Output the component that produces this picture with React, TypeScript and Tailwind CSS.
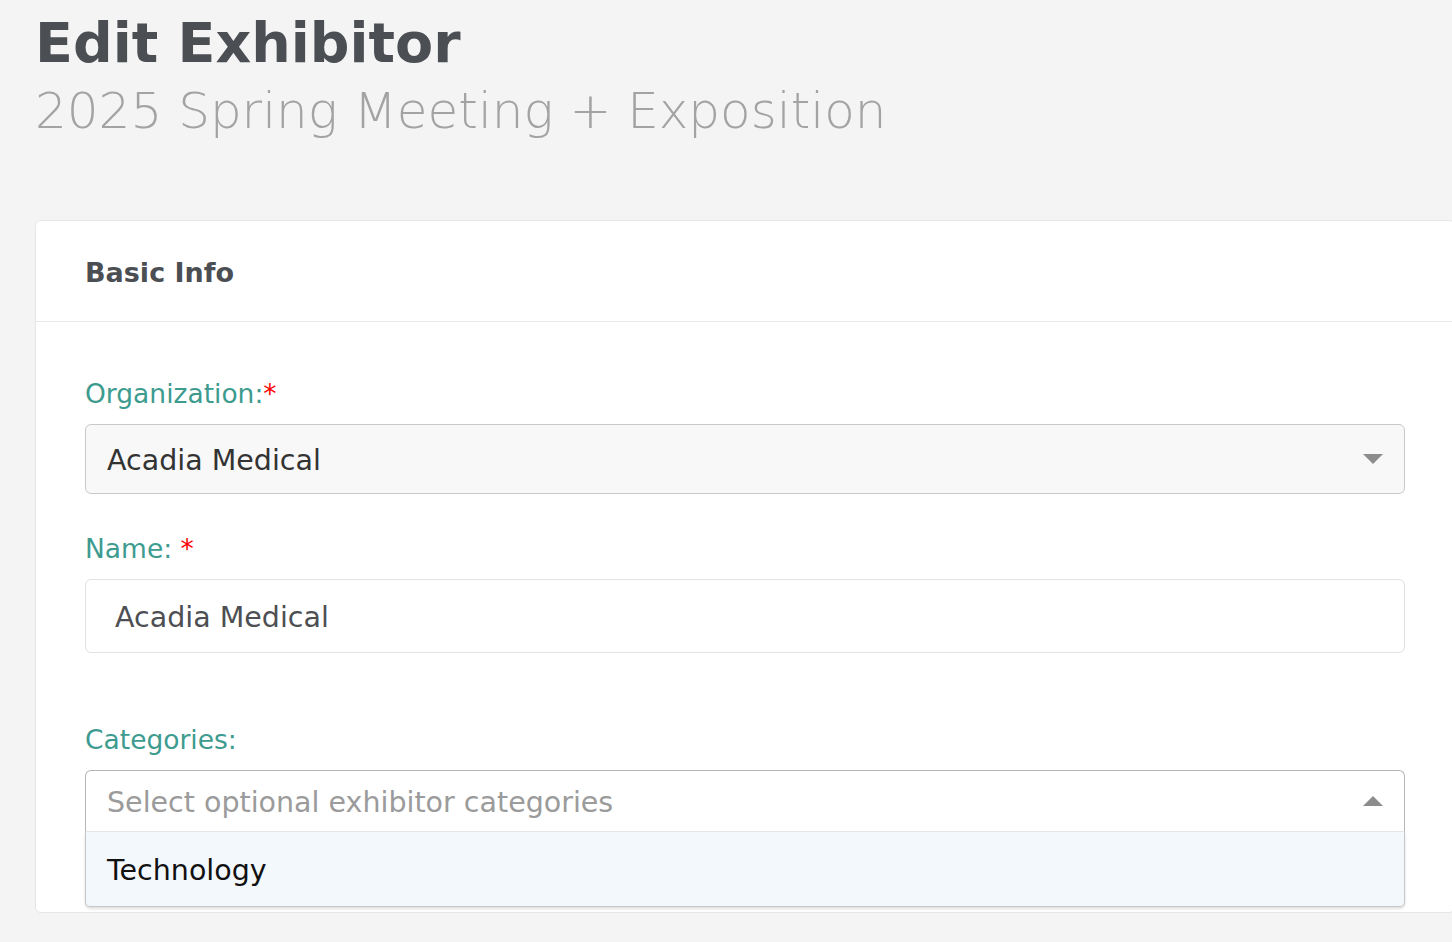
import React from 'react';

const Required = ({ spaced }: { spaced?: boolean }) => (
  <span className="text-[#ff0000]">{spaced ? ' *' : '*'}</span>
);

const Caret = ({ up }: { up?: boolean }) => (
  <svg width="20" height="10" viewBox="0 0 20 10" className="shrink-0">
    {up ? <path d="M0 10 L10 0 L20 10 Z" fill="#8c8c8c" /> : <path d="M0 0 L20 0 L10 10 Z" fill="#8c8c8c" />}
  </svg>
);

const FieldLabel = ({ children }: { children: React.ReactNode }) => (
  <div className="text-[26.5px] leading-[32px] text-[#3d9b8f] mb-[14px]">{children}</div>
);

export default function App() {
  return (
    <div className="min-h-screen w-full overflow-hidden bg-[#f4f4f4] font-['DejaVu_Sans',sans-serif]">
      <div className="pl-[35px] pt-[15px]">
        <h1 className="text-[55.5px] leading-[56px] font-bold text-[#4b4e53] whitespace-nowrap">Edit Exhibitor</h1>
        <div className="mt-[15px] text-[50px] leading-[50px] font-light text-[#a3a3a3] whitespace-nowrap">
          2025 Spring Meeting + Exposition
        </div>

        <div className="mt-[84px] w-[1420px] bg-white border border-[#e6e6e6] rounded-[6px]">
          <div className="h-[101px] flex items-center pt-[2px] px-[49px] border-b border-[#e8e8e8]">
            <h2 className="text-[27px] leading-[27px] font-bold text-[#4b4e53]">Basic Info</h2>
          </div>

          <div className="pt-[56px] pb-[81px] px-[49px]">
            <FieldLabel>
              Organization:<Required />
            </FieldLabel>
            <div className="h-[70px] flex items-center justify-between pt-[4px] pl-[21px] pr-[21px] bg-[#f8f8f8] border border-[#c9c9c9] rounded-[6px]">
              <span className="text-[28.5px] text-[#333333]">Acadia Medical</span>
              <span className="-mt-[4px]"><Caret /></span>
            </div>

            <div className="mt-[39px]">
              <FieldLabel>
                Name:<Required spaced />
              </FieldLabel>
              <div className="h-[74px] flex items-center pt-[5px] pl-[29px] bg-white border border-[#e2e2e2] rounded-[6px]">
                <span className="text-[28.5px] text-[#4d4f53]">Acadia Medical</span>
              </div>
            </div>

            <div className="mt-[71px]">
              <FieldLabel>Categories:</FieldLabel>
              <div className="relative">
                <div className="h-[61px] flex items-center justify-between pt-[5px] pl-[21px] pr-[21px] bg-white border border-b-0 border-[#b5b5b5] rounded-t-[6px]">
                  <span className="text-[28.5px] text-[#9b9b9b]">Select optional exhibitor categories</span>
                  <span className="-mt-[5px]"><Caret up /></span>
                </div>
                <div className="absolute left-0 right-0 top-full z-10 h-[76px] flex items-center pt-[4px] pl-[21px] bg-[#f3f8fd] border border-[#c6c6c6] border-t-[#e6e6e6] rounded-b-[5px] shadow-[0_2px_3px_rgba(0,0,0,0.12)]">
                  <span className="text-[28.5px] text-[#111111]">Technology</span>
                </div>
              </div>
            </div>
          </div>
        </div>
      </div>
    </div>
  );
}
